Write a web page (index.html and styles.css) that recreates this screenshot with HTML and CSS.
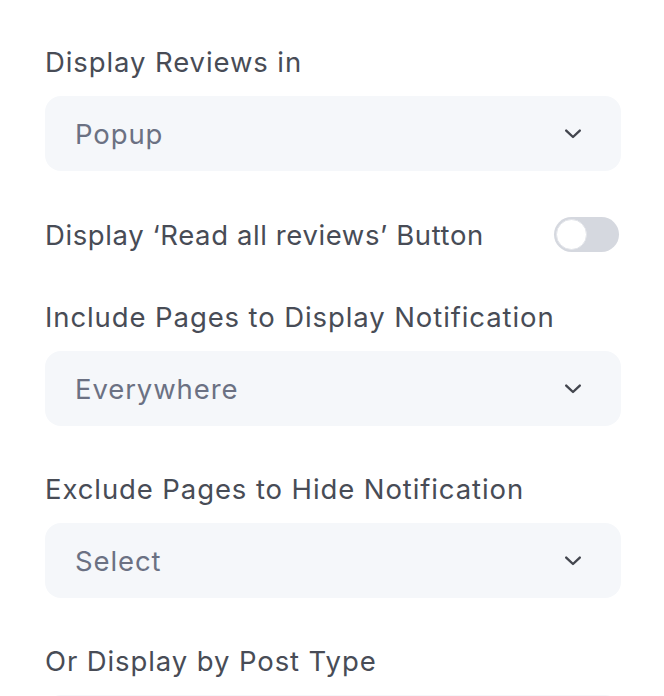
FILE: index.html
```html
<!DOCTYPE html>
<html>
<head>
<meta charset="utf-8">
<link rel="stylesheet" href="styles.css">
</head>
<body>
<div class="panel">
  <div class="field f1">
    <div class="label">Display Reviews in</div>
    <div class="select"><span class="value">Popup</span><svg class="chev" width="18" height="12" viewBox="0 0 18 12"><path d="M2.2 2.6 L9 9 L15.8 2.6" fill="none" stroke="#43464e" stroke-width="2.4" stroke-linecap="round" stroke-linejoin="round"/></svg></div>
  </div>
  <div class="toggle-row">
    <div class="label toggle-label">Display ‘Read all reviews’ Button</div>
    <div class="toggle"><div class="knob"></div></div>
  </div>
  <div class="field f2">
    <div class="label">Include Pages to Display Notification</div>
    <div class="select"><span class="value">Everywhere</span><svg class="chev" width="18" height="12" viewBox="0 0 18 12"><path d="M2.2 2.6 L9 9 L15.8 2.6" fill="none" stroke="#43464e" stroke-width="2.4" stroke-linecap="round" stroke-linejoin="round"/></svg></div>
  </div>
  <div class="field f3">
    <div class="label">Exclude Pages to Hide Notification</div>
    <div class="select"><span class="value">Select</span><svg class="chev" width="18" height="12" viewBox="0 0 18 12"><path d="M2.2 2.6 L9 9 L15.8 2.6" fill="none" stroke="#43464e" stroke-width="2.4" stroke-linecap="round" stroke-linejoin="round"/></svg></div>
  </div>
  <div class="field f4">
    <div class="label">Or Display by Post Type</div>
    <div class="select"><span class="value"></span></div>
  </div>
</div>
</body>
</html>
```
FILE: styles.css
```css
html, body {
  margin: 0;
  padding: 0;
  background: #ffffff;
}
body {
  font-family: Inter, "Noto Sans", sans-serif;
  overflow: hidden;
  height: 696px;
}
.panel {
  height: 696px;
  overflow: hidden;
  box-sizing: border-box;
  padding: 46px 43px 0 45px;
  display: flex;
  flex-direction: column;
}
.label {
  font-size: 27.5px;
  line-height: 32px;
  letter-spacing: 0.9px;
  color: #484c56;
  font-weight: 400;
  white-space: nowrap;
}
.toggle-label {
  letter-spacing: 0.6px;
}
.field .label {
  margin-bottom: 18px;
}
.select {
  flex: none;
  height: 75px;
  box-sizing: border-box;
  background: #f5f7fa;
  border-radius: 16px;
  display: flex;
  align-items: center;
  justify-content: space-between;
  padding: 0 39px 0 30px;
}
.value {
  font-size: 27.5px;
  letter-spacing: 0.9px;
  color: #6b7183;
}
.chev {
  display: block;
}
.toggle-row {
  flex: none;
  margin-top: 46px;
  height: 35px;
  display: flex;
  align-items: center;
  justify-content: space-between;
  padding-right: 2px;
}
.f2 { margin-top: 49px; }
.f3 { margin-top: 47px; }
.f4 { margin-top: 47px; }
.toggle {
  flex: none;
  width: 65px;
  height: 35px;
  border-radius: 18px;
  background: #d5d8df;
  position: relative;
  box-sizing: border-box;
}
.knob {
  position: absolute;
  left: 2px;
  top: 2px;
  width: 31px;
  height: 31px;
  border-radius: 50%;
  background: #ffffff;
  box-sizing: border-box;
  border: 1px solid #e3e5ea;
}
```
